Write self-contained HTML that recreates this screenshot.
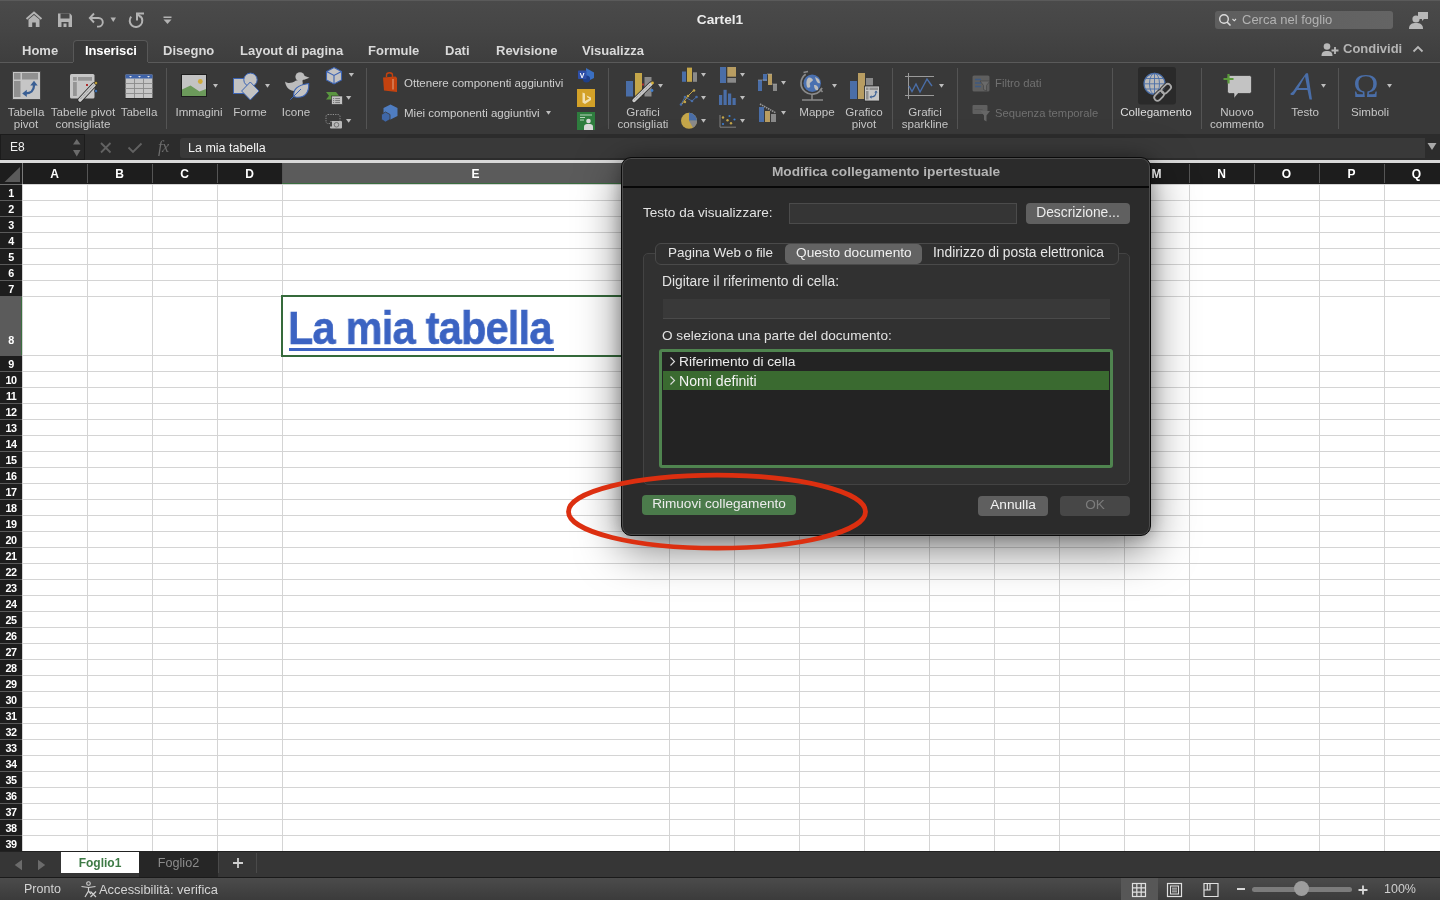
<!DOCTYPE html>
<html><head><meta charset="utf-8">
<style>
*{margin:0;padding:0;box-sizing:border-box}
html,body{width:1440px;height:900px;overflow:hidden;background:#fff;font-family:"Liberation Sans",sans-serif}
.t,.rl,.ch,.rh{will-change:transform}
.a{position:absolute}
.t{position:absolute;white-space:nowrap;color:#e6e6e6}
.ch{top:164px;height:21px;line-height:21px;text-align:center;color:#fff;font-weight:bold;font-size:12px}
.rh{left:0;width:22px;height:16px;line-height:16px;text-align:center;color:#fff;font-weight:bold;font-size:10.8px;letter-spacing:-0.6px}
.rl{position:absolute;white-space:nowrap;color:#c6c6c6;font-size:11.6px;text-align:center;line-height:12px}
.sep{position:absolute;top:68px;width:1px;height:61px;background:#545454}
</style></head><body>
<div class="a" style="left:0;top:163px;width:1440px;height:21px;background:#1d1d1d"></div>
<div class="a" style="left:0;top:160px;width:1440px;height:3px;background:#d9d9d9"></div>
<svg class="a" style="left:0;top:163px" width="22" height="21"><polygon points="4.5,19 20,4 20,19" fill="#5a5a5a"/></svg>
<div class="a" style="left:22px;top:163px;width:1px;height:21px;background:#7a7a7a"></div>
<div class="a ch" style="left:22px;width:65px">A</div>
<div class="a ch" style="left:87px;width:65px">B</div>
<div class="a ch" style="left:152px;width:65px">C</div>
<div class="a ch" style="left:217px;width:65px">D</div>
<div class="a" style="left:282px;top:163px;width:387px;height:21px;background:#5b5b5b"></div><div class="a" style="left:282px;top:183px;width:387px;height:1.6px;background:#3b6e40"></div>
<div class="a ch" style="left:282px;width:387px">E</div>
<div class="a ch" style="left:669px;width:65px">F</div>
<div class="a ch" style="left:734px;width:65px">G</div>
<div class="a ch" style="left:799px;width:65px">H</div>
<div class="a ch" style="left:864px;width:65px">I</div>
<div class="a ch" style="left:929px;width:65px">J</div>
<div class="a ch" style="left:994px;width:65px">K</div>
<div class="a ch" style="left:1059px;width:65px">L</div>
<div class="a ch" style="left:1124px;width:65px">M</div>
<div class="a ch" style="left:1189px;width:65px">N</div>
<div class="a ch" style="left:1254px;width:65px">O</div>
<div class="a ch" style="left:1319px;width:65px">P</div>
<div class="a ch" style="left:1384px;width:65px">Q</div>
<div class="a" style="left:87px;top:164px;width:1px;height:19px;background:#555"></div>
<div class="a" style="left:152px;top:164px;width:1px;height:19px;background:#555"></div>
<div class="a" style="left:217px;top:164px;width:1px;height:19px;background:#555"></div>
<div class="a" style="left:282px;top:164px;width:1px;height:19px;background:#555"></div>
<div class="a" style="left:669px;top:164px;width:1px;height:19px;background:#555"></div>
<div class="a" style="left:734px;top:164px;width:1px;height:19px;background:#555"></div>
<div class="a" style="left:799px;top:164px;width:1px;height:19px;background:#555"></div>
<div class="a" style="left:864px;top:164px;width:1px;height:19px;background:#555"></div>
<div class="a" style="left:929px;top:164px;width:1px;height:19px;background:#555"></div>
<div class="a" style="left:994px;top:164px;width:1px;height:19px;background:#555"></div>
<div class="a" style="left:1059px;top:164px;width:1px;height:19px;background:#555"></div>
<div class="a" style="left:1124px;top:164px;width:1px;height:19px;background:#555"></div>
<div class="a" style="left:1189px;top:164px;width:1px;height:19px;background:#555"></div>
<div class="a" style="left:1254px;top:164px;width:1px;height:19px;background:#555"></div>
<div class="a" style="left:1319px;top:164px;width:1px;height:19px;background:#555"></div>
<div class="a" style="left:1384px;top:164px;width:1px;height:19px;background:#555"></div>
<div class="a" style="left:1449px;top:164px;width:1px;height:19px;background:#555"></div>
<div class="a" style="left:23px;top:184px;width:1417px;height:667px;background:#fff"></div>
<div class="a" style="left:0;top:184px;width:1440px;height:1px;background:#d4d4d4"></div>
<div class="a" style="left:0;top:200px;width:1440px;height:1px;background:#d4d4d4"></div>
<div class="a" style="left:0;top:216px;width:1440px;height:1px;background:#d4d4d4"></div>
<div class="a" style="left:0;top:232px;width:1440px;height:1px;background:#d4d4d4"></div>
<div class="a" style="left:0;top:248px;width:1440px;height:1px;background:#d4d4d4"></div>
<div class="a" style="left:0;top:264px;width:1440px;height:1px;background:#d4d4d4"></div>
<div class="a" style="left:0;top:280px;width:1440px;height:1px;background:#d4d4d4"></div>
<div class="a" style="left:0;top:296px;width:1440px;height:1px;background:#d4d4d4"></div>
<div class="a" style="left:0;top:355px;width:1440px;height:1px;background:#d4d4d4"></div>
<div class="a" style="left:0;top:371px;width:1440px;height:1px;background:#d4d4d4"></div>
<div class="a" style="left:0;top:387px;width:1440px;height:1px;background:#d4d4d4"></div>
<div class="a" style="left:0;top:403px;width:1440px;height:1px;background:#d4d4d4"></div>
<div class="a" style="left:0;top:419px;width:1440px;height:1px;background:#d4d4d4"></div>
<div class="a" style="left:0;top:435px;width:1440px;height:1px;background:#d4d4d4"></div>
<div class="a" style="left:0;top:451px;width:1440px;height:1px;background:#d4d4d4"></div>
<div class="a" style="left:0;top:467px;width:1440px;height:1px;background:#d4d4d4"></div>
<div class="a" style="left:0;top:483px;width:1440px;height:1px;background:#d4d4d4"></div>
<div class="a" style="left:0;top:499px;width:1440px;height:1px;background:#d4d4d4"></div>
<div class="a" style="left:0;top:515px;width:1440px;height:1px;background:#d4d4d4"></div>
<div class="a" style="left:0;top:531px;width:1440px;height:1px;background:#d4d4d4"></div>
<div class="a" style="left:0;top:547px;width:1440px;height:1px;background:#d4d4d4"></div>
<div class="a" style="left:0;top:563px;width:1440px;height:1px;background:#d4d4d4"></div>
<div class="a" style="left:0;top:579px;width:1440px;height:1px;background:#d4d4d4"></div>
<div class="a" style="left:0;top:595px;width:1440px;height:1px;background:#d4d4d4"></div>
<div class="a" style="left:0;top:611px;width:1440px;height:1px;background:#d4d4d4"></div>
<div class="a" style="left:0;top:627px;width:1440px;height:1px;background:#d4d4d4"></div>
<div class="a" style="left:0;top:643px;width:1440px;height:1px;background:#d4d4d4"></div>
<div class="a" style="left:0;top:659px;width:1440px;height:1px;background:#d4d4d4"></div>
<div class="a" style="left:0;top:675px;width:1440px;height:1px;background:#d4d4d4"></div>
<div class="a" style="left:0;top:691px;width:1440px;height:1px;background:#d4d4d4"></div>
<div class="a" style="left:0;top:707px;width:1440px;height:1px;background:#d4d4d4"></div>
<div class="a" style="left:0;top:723px;width:1440px;height:1px;background:#d4d4d4"></div>
<div class="a" style="left:0;top:739px;width:1440px;height:1px;background:#d4d4d4"></div>
<div class="a" style="left:0;top:755px;width:1440px;height:1px;background:#d4d4d4"></div>
<div class="a" style="left:0;top:771px;width:1440px;height:1px;background:#d4d4d4"></div>
<div class="a" style="left:0;top:787px;width:1440px;height:1px;background:#d4d4d4"></div>
<div class="a" style="left:0;top:803px;width:1440px;height:1px;background:#d4d4d4"></div>
<div class="a" style="left:0;top:819px;width:1440px;height:1px;background:#d4d4d4"></div>
<div class="a" style="left:0;top:835px;width:1440px;height:1px;background:#d4d4d4"></div>
<div class="a" style="left:0;top:851px;width:1440px;height:1px;background:#d4d4d4"></div>
<div class="a" style="left:0;top:184px;width:22px;height:667px;background:#1d1d1d"></div>
<div class="a rh" style="top:185px">1</div>
<div class="a" style="left:0;top:200px;width:22px;height:1px;background:#5a5a5a"></div>
<div class="a rh" style="top:201px">2</div>
<div class="a" style="left:0;top:216px;width:22px;height:1px;background:#5a5a5a"></div>
<div class="a rh" style="top:217px">3</div>
<div class="a" style="left:0;top:232px;width:22px;height:1px;background:#5a5a5a"></div>
<div class="a rh" style="top:233px">4</div>
<div class="a" style="left:0;top:248px;width:22px;height:1px;background:#5a5a5a"></div>
<div class="a rh" style="top:249px">5</div>
<div class="a" style="left:0;top:264px;width:22px;height:1px;background:#5a5a5a"></div>
<div class="a rh" style="top:265px">6</div>
<div class="a" style="left:0;top:280px;width:22px;height:1px;background:#5a5a5a"></div>
<div class="a rh" style="top:281px">7</div>
<div class="a" style="left:0;top:296px;width:22px;height:1px;background:#5a5a5a"></div>
<div class="a" style="left:0;top:297px;width:22px;height:59px;background:#5b5b5b;border-right:1.6px solid #3b6e40"></div>
<div class="a rh" style="top:332px">8</div>
<div class="a" style="left:0;top:355px;width:22px;height:1px;background:#5a5a5a"></div>
<div class="a rh" style="top:356px">9</div>
<div class="a" style="left:0;top:371px;width:22px;height:1px;background:#5a5a5a"></div>
<div class="a rh" style="top:372px">10</div>
<div class="a" style="left:0;top:387px;width:22px;height:1px;background:#5a5a5a"></div>
<div class="a rh" style="top:388px">11</div>
<div class="a" style="left:0;top:403px;width:22px;height:1px;background:#5a5a5a"></div>
<div class="a rh" style="top:404px">12</div>
<div class="a" style="left:0;top:419px;width:22px;height:1px;background:#5a5a5a"></div>
<div class="a rh" style="top:420px">13</div>
<div class="a" style="left:0;top:435px;width:22px;height:1px;background:#5a5a5a"></div>
<div class="a rh" style="top:436px">14</div>
<div class="a" style="left:0;top:451px;width:22px;height:1px;background:#5a5a5a"></div>
<div class="a rh" style="top:452px">15</div>
<div class="a" style="left:0;top:467px;width:22px;height:1px;background:#5a5a5a"></div>
<div class="a rh" style="top:468px">16</div>
<div class="a" style="left:0;top:483px;width:22px;height:1px;background:#5a5a5a"></div>
<div class="a rh" style="top:484px">17</div>
<div class="a" style="left:0;top:499px;width:22px;height:1px;background:#5a5a5a"></div>
<div class="a rh" style="top:500px">18</div>
<div class="a" style="left:0;top:515px;width:22px;height:1px;background:#5a5a5a"></div>
<div class="a rh" style="top:516px">19</div>
<div class="a" style="left:0;top:531px;width:22px;height:1px;background:#5a5a5a"></div>
<div class="a rh" style="top:532px">20</div>
<div class="a" style="left:0;top:547px;width:22px;height:1px;background:#5a5a5a"></div>
<div class="a rh" style="top:548px">21</div>
<div class="a" style="left:0;top:563px;width:22px;height:1px;background:#5a5a5a"></div>
<div class="a rh" style="top:564px">22</div>
<div class="a" style="left:0;top:579px;width:22px;height:1px;background:#5a5a5a"></div>
<div class="a rh" style="top:580px">23</div>
<div class="a" style="left:0;top:595px;width:22px;height:1px;background:#5a5a5a"></div>
<div class="a rh" style="top:596px">24</div>
<div class="a" style="left:0;top:611px;width:22px;height:1px;background:#5a5a5a"></div>
<div class="a rh" style="top:612px">25</div>
<div class="a" style="left:0;top:627px;width:22px;height:1px;background:#5a5a5a"></div>
<div class="a rh" style="top:628px">26</div>
<div class="a" style="left:0;top:643px;width:22px;height:1px;background:#5a5a5a"></div>
<div class="a rh" style="top:644px">27</div>
<div class="a" style="left:0;top:659px;width:22px;height:1px;background:#5a5a5a"></div>
<div class="a rh" style="top:660px">28</div>
<div class="a" style="left:0;top:675px;width:22px;height:1px;background:#5a5a5a"></div>
<div class="a rh" style="top:676px">29</div>
<div class="a" style="left:0;top:691px;width:22px;height:1px;background:#5a5a5a"></div>
<div class="a rh" style="top:692px">30</div>
<div class="a" style="left:0;top:707px;width:22px;height:1px;background:#5a5a5a"></div>
<div class="a rh" style="top:708px">31</div>
<div class="a" style="left:0;top:723px;width:22px;height:1px;background:#5a5a5a"></div>
<div class="a rh" style="top:724px">32</div>
<div class="a" style="left:0;top:739px;width:22px;height:1px;background:#5a5a5a"></div>
<div class="a rh" style="top:740px">33</div>
<div class="a" style="left:0;top:755px;width:22px;height:1px;background:#5a5a5a"></div>
<div class="a rh" style="top:756px">34</div>
<div class="a" style="left:0;top:771px;width:22px;height:1px;background:#5a5a5a"></div>
<div class="a rh" style="top:772px">35</div>
<div class="a" style="left:0;top:787px;width:22px;height:1px;background:#5a5a5a"></div>
<div class="a rh" style="top:788px">36</div>
<div class="a" style="left:0;top:803px;width:22px;height:1px;background:#5a5a5a"></div>
<div class="a rh" style="top:804px">37</div>
<div class="a" style="left:0;top:819px;width:22px;height:1px;background:#5a5a5a"></div>
<div class="a rh" style="top:820px">38</div>
<div class="a" style="left:0;top:835px;width:22px;height:1px;background:#5a5a5a"></div>
<div class="a rh" style="top:836px">39</div>
<div class="a" style="left:0;top:851px;width:22px;height:1px;background:#5a5a5a"></div>
<div class="a" style="left:87px;top:184px;width:1px;height:667px;background:#d4d4d4"></div>
<div class="a" style="left:152px;top:184px;width:1px;height:667px;background:#d4d4d4"></div>
<div class="a" style="left:217px;top:184px;width:1px;height:667px;background:#d4d4d4"></div>
<div class="a" style="left:282px;top:184px;width:1px;height:667px;background:#d4d4d4"></div>
<div class="a" style="left:669px;top:184px;width:1px;height:667px;background:#d4d4d4"></div>
<div class="a" style="left:734px;top:184px;width:1px;height:667px;background:#d4d4d4"></div>
<div class="a" style="left:799px;top:184px;width:1px;height:667px;background:#d4d4d4"></div>
<div class="a" style="left:864px;top:184px;width:1px;height:667px;background:#d4d4d4"></div>
<div class="a" style="left:929px;top:184px;width:1px;height:667px;background:#d4d4d4"></div>
<div class="a" style="left:994px;top:184px;width:1px;height:667px;background:#d4d4d4"></div>
<div class="a" style="left:1059px;top:184px;width:1px;height:667px;background:#d4d4d4"></div>
<div class="a" style="left:1124px;top:184px;width:1px;height:667px;background:#d4d4d4"></div>
<div class="a" style="left:1189px;top:184px;width:1px;height:667px;background:#d4d4d4"></div>
<div class="a" style="left:1254px;top:184px;width:1px;height:667px;background:#d4d4d4"></div>
<div class="a" style="left:1319px;top:184px;width:1px;height:667px;background:#d4d4d4"></div>
<div class="a" style="left:1384px;top:184px;width:1px;height:667px;background:#d4d4d4"></div>
<div class="a" style="left:1449px;top:184px;width:1px;height:667px;background:#d4d4d4"></div>
<div class="a" style="left:22px;top:184px;width:1px;height:667px;background:#d4d4d4"></div>
<div class="a" style="left:0;top:184px;width:22px;height:1px;background:#6e6e6e"></div>
<div class="a" style="left:0;top:0;width:1440px;height:62px;background:linear-gradient(#4a4a4a,#454545 30px,#3e3e3e)"></div>
<div class="a" style="left:0;top:0;width:1440px;height:1px;background:#5a5a5a"></div>
<!-- title icons -->
<svg class="a" style="left:25px;top:11px" width="18" height="17" viewBox="0 0 18 17">
 <path d="M1.5 8 L9 1.5 L16.5 8" fill="none" stroke="#b3b3b3" stroke-width="2" stroke-linejoin="miter"/>
 <path d="M3.5 8.5 L9 4 L14.5 8.5 V16 H10.8 V11.5 H7.2 V16 H3.5 Z" fill="#b3b3b3"/>
</svg>
<svg class="a" style="left:57px;top:12px" width="16" height="16" viewBox="0 0 16 16">
 <path d="M1 1.5 H13 L15 3.5 V15 H1 Z" fill="#b3b3b3"/>
 <rect x="3.5" y="1.5" width="9" height="5" fill="#474747"/>
 <rect x="4.5" y="10" width="7" height="5" fill="#474747"/>
 <rect x="6.5" y="11.5" width="3" height="3.5" fill="#b3b3b3"/>
</svg>
<svg class="a" style="left:88px;top:12px" width="18" height="17" viewBox="0 0 18 17">
 <path d="M6 1.5 L1.8 6 L6 10.5" fill="none" stroke="#b3b3b3" stroke-width="1.9"/>
 <path d="M2 6 H10.5 A4.3 4.3 0 0 1 10.5 14.6 H9" fill="none" stroke="#b3b3b3" stroke-width="1.9"/>
</svg>
<svg class="a" style="left:110px;top:17px" width="7" height="6"><path d="M0.5 0.5 H6 L3.25 5 Z" fill="#b3b3b3"/></svg>
<svg class="a" style="left:128px;top:12px" width="17" height="17" viewBox="0 0 17 17">
 <path d="M3.2 4.6 A6.3 6.3 0 1 0 12.2 4" fill="none" stroke="#b3b3b3" stroke-width="2"/>
 <path d="M9 8.5 V1.6 H16" fill="none" stroke="#b3b3b3" stroke-width="2"/>
 <path d="M9.5 2 L12.5 5" stroke="#b3b3b3" stroke-width="2"/>
</svg>
<svg class="a" style="left:163px;top:16px" width="9" height="9" viewBox="0 0 9 9">
 <rect x="0.5" y="0.5" width="8" height="1.5" fill="#b3b3b3"/>
 <path d="M0.5 3.5 H8.5 L4.5 8 Z" fill="#b3b3b3"/>
</svg>
<div class="t" style="left:0;width:1440px;text-align:center;top:12px;font-size:13.7px;font-weight:bold;color:#ececec;line-height:16px">Cartel1</div>
<!-- search -->
<div class="a" style="left:1215px;top:11px;width:178px;height:18px;background:linear-gradient(90deg,#5e5e5e,#646464);border-radius:3px"></div>
<svg class="a" style="left:1218px;top:13px" width="22" height="14" viewBox="0 0 22 14">
 <circle cx="6" cy="6" r="4.3" fill="none" stroke="#dcdcdc" stroke-width="1.4"/>
 <path d="M9 9 L12.5 12.5" stroke="#dcdcdc" stroke-width="1.6"/>
 <path d="M14.5 6 L16.3 7.8 L18 6" fill="none" stroke="#dcdcdc" stroke-width="1.1"/>
</svg>
<div class="t" style="left:1242px;top:12px;font-size:13px;color:#b2b2b2;line-height:16px">Cerca nel foglio</div>
<svg class="a" style="left:1408px;top:10px" width="21" height="20" viewBox="0 0 21 20">
 <path d="M10 2 H20 V9 H16 L14 11 V9 H10 Z" fill="#b8b8b8"/>
 <circle cx="8" cy="9" r="3.6" fill="#b8b8b8"/>
 <path d="M1 19 C1 14 4 13 8 13 C12 13 15 14 15 19 Z" fill="#b8b8b8"/>
</svg>
<!-- tabs -->

<div class="a" style="left:73px;top:40px;width:75px;height:24px;background:#393939;border:1px solid #585858;border-bottom:none;border-radius:4px 4px 0 0"></div>
<div class="t" style="left:22px;top:43px;font-size:13px;font-weight:bold;color:#d9d9d9;line-height:16px">Home</div>
<div class="t" style="left:85px;top:43px;font-size:13px;font-weight:bold;color:#ffffff;line-height:16px;letter-spacing:-0.1px">Inserisci</div>
<div class="t" style="left:163px;top:43px;font-size:13px;font-weight:bold;color:#d9d9d9;line-height:16px">Disegno</div>
<div class="t" style="left:240px;top:43px;font-size:13px;font-weight:bold;color:#d9d9d9;line-height:16px">Layout di pagina</div>
<div class="t" style="left:368px;top:43px;font-size:13px;font-weight:bold;color:#d9d9d9;line-height:16px">Formule</div>
<div class="t" style="left:445px;top:43px;font-size:13px;font-weight:bold;color:#d9d9d9;line-height:16px">Dati</div>
<div class="t" style="left:496px;top:43px;font-size:13px;font-weight:bold;color:#d9d9d9;line-height:16px">Revisione</div>
<div class="t" style="left:582px;top:43px;font-size:13px;font-weight:bold;color:#d9d9d9;line-height:16px">Visualizza</div>
<svg class="a" style="left:1321px;top:42px" width="18" height="15" viewBox="0 0 18 15">
 <circle cx="6" cy="4.5" r="3.3" fill="#b8b8b8"/>
 <path d="M0.5 14 C0.5 10 2.5 9 6 9 C9.5 9 11.5 10 11.5 14 Z" fill="#b8b8b8"/>
 <path d="M14 5 V12 M10.5 8.5 H17.5" stroke="#b8b8b8" stroke-width="1.8"/>
</svg>
<div class="t" style="left:1343px;top:41px;font-size:13px;font-weight:bold;color:#b4b4b4;line-height:16px">Condividi</div>
<svg class="a" style="left:1412px;top:45px" width="12" height="8" viewBox="0 0 12 8"><path d="M1.5 6.5 L6 2 L10.5 6.5" fill="none" stroke="#b8b8b8" stroke-width="1.8"/></svg>

<div class="a" style="left:0;top:62px;width:1440px;height:72px;background:#393939"></div>
<div class="a" style="left:0;top:62px;width:73px;height:1px;background:#5a5a5a"></div>
<div class="a" style="left:148px;top:62px;width:1292px;height:1px;background:#5a5a5a"></div>
<div class="sep" style="left:166px"></div>
<div class="sep" style="left:366px"></div>
<div class="sep" style="left:608px"></div>
<div class="sep" style="left:892px"></div>
<div class="sep" style="left:957px"></div>
<div class="sep" style="left:1112px"></div>
<div class="sep" style="left:1201px"></div>
<div class="sep" style="left:1274px"></div>
<div class="sep" style="left:1338px"></div>
<!-- labels -->
<div class="rl" style="left:-24px;width:100px;top:105.5px">Tabella<br>pivot</div>
<div class="rl" style="left:33px;width:100px;top:105.5px">Tabelle pivot<br>consigliate</div>
<div class="rl" style="left:89px;width:100px;top:105.5px">Tabella</div>
<div class="rl" style="left:149px;width:100px;top:105.5px">Immagini</div>
<div class="rl" style="left:200px;width:100px;top:105.5px">Forme</div>
<div class="rl" style="left:246px;width:100px;top:105.5px">Icone</div>
<div class="rl" style="left:593px;width:100px;top:105.5px">Grafici<br>consigliati</div>
<div class="rl" style="left:767px;width:100px;top:105.5px">Mappe</div>
<div class="rl" style="left:814px;width:100px;top:105.5px">Grafico<br>pivot</div>
<div class="rl" style="left:875px;width:100px;top:105.5px">Grafici<br>sparkline</div>
<div class="rl" style="left:1106px;width:100px;top:105.5px;color:#dedede;font-size:11.6px">Collegamento</div>
<div class="rl" style="left:1187px;width:100px;top:105.5px">Nuovo<br>commento</div>
<div class="rl" style="left:1255px;width:100px;top:105.5px">Testo</div>
<div class="rl" style="left:1320px;width:100px;top:105.5px">Simboli</div>
<div class="t" style="left:404px;top:76px;font-size:11.5px;color:#cfcfcf;line-height:14px">Ottenere componenti aggiuntivi</div>
<div class="t" style="left:404px;top:106px;font-size:11.5px;color:#cfcfcf;line-height:14px">Miei componenti aggiuntivi</div>
<div class="t" style="left:995px;top:76px;font-size:11.3px;color:#707070;line-height:14px">Filtro dati</div>
<div class="t" style="left:995px;top:106px;font-size:11.2px;color:#707070;line-height:14px">Sequenza temporale</div>
<!-- carets -->
<svg class="a" style="left:0;top:62px" width="1440" height="72">
 <g fill="#bdbdbd">
 <path d="M213 22h5l-2.5 3.7z"/>
 <path d="M265 22h5l-2.5 3.7z"/>
 <path d="M348.7 11h5.3l-2.65 3.8z"/>
 <path d="M346 34h5.3l-2.65 3.8z"/>
 <path d="M346 57h5.3l-2.65 3.8z"/>
 <path d="M546 49h5l-2.5 3.7z"/>
 <path d="M658 22h5l-2.5 3.7z"/>
 <path d="M701 11h5l-2.5 3.7z"/>
 <path d="M701 34h5l-2.5 3.7z"/>
 <path d="M701 57h5l-2.5 3.7z"/>
 <path d="M740 11h5l-2.5 3.7z"/>
 <path d="M740 34h5l-2.5 3.7z"/>
 <path d="M740 57h5l-2.5 3.7z"/>
 <path d="M781 19h5l-2.5 3.7z"/>
 <path d="M781 49h5l-2.5 3.7z"/>
 <path d="M832 22h5l-2.5 3.7z"/>
 <path d="M939 22h5l-2.5 3.7z"/>
 <path d="M1321 22h5l-2.5 3.7z"/>
 <path d="M1387 22h5l-2.5 3.7z"/>
 </g>
</svg>

<svg class="a" style="left:0;top:0" width="620" height="134">
 <!-- Tabella pivot -->
 <rect x="12" y="71" width="29" height="29" fill="#555" opacity="0.6"/>
 <rect x="13" y="72" width="27" height="27" fill="#c6c6c6"/>
 <rect x="14" y="73" width="6.5" height="6.5" fill="#909090"/>
 <rect x="22" y="73" width="16" height="6.5" fill="#909090"/>
 <rect x="14" y="81" width="6.5" height="16" fill="#909090"/>
 <path d="M25.5 93.4 C30.5 93.4 34 90.5 34 85.5 V84" fill="none" stroke="#3a5f94" stroke-width="2.3"/>
 <path d="M30.3 85.5 L34 80.8 L37.7 85.5 Z M26.8 89.7 L22.2 93.4 L26.8 97.1 Z" fill="#3a5f94"/>
 <!-- Tabelle pivot consigliate -->
 <rect x="70" y="74" width="24.5" height="24.5" rx="1.5" fill="#c6c6c6"/>
 <rect x="73" y="77" width="3.8" height="3.7" fill="#959595"/>
 <rect x="78" y="77" width="14" height="3.7" fill="#959595"/>
 <rect x="73" y="82" width="3.8" height="14" fill="#959595"/>
 <rect x="86" y="84" width="2" height="2" fill="#b03030"/>
 <path d="M80 100 L94 85" stroke="#2a2a2a" stroke-width="5.2" stroke-linecap="round"/>
 <path d="M80 100 L94 85" stroke="#c9c9c9" stroke-width="3.6" stroke-linecap="round"/>
 <path d="M80.5 99 L93.5 85.5" stroke="#777" stroke-width="0.8" stroke-dasharray="1 1"/>
 <circle cx="96" cy="83" r="1.5" fill="#d8b23a" stroke="#2a2a2a" stroke-width="0.6"/>
 <circle cx="96" cy="91" r="1.5" fill="#3f7fd0" stroke="#2a2a2a" stroke-width="0.6"/>
 <!-- Tabella -->
 <rect x="125" y="74" width="28" height="24.5" fill="#1e1e1e"/>
 <rect x="125.5" y="74.5" width="27" height="23.5" fill="#c6c6c6"/>
 <rect x="125.5" y="74.5" width="27" height="4" fill="#3f63a8"/>
 <path d="M129 76h3l-1.5 1.6zM138 76h3l-1.5 1.6zM147 76h3l-1.5 1.6z" fill="#e8e8e8"/>
 <path d="M134.5 78.5V98M143.5 78.5V98M125.5 83.5H152.5M125.5 88.5H152.5M125.5 93.5H152.5" stroke="#8a8a8a" stroke-width="0.9"/>
 <!-- Immagini -->
 <rect x="181" y="74" width="26" height="23" fill="#1e1e1e"/>
 <rect x="182" y="75" width="24" height="21" fill="#c3c3c3"/>
 <path d="M182 96 V89.5 L190.5 85.5 L199.5 91.5 L206 89 V96 Z" fill="#6c9a5b"/>
 <circle cx="200.3" cy="81.5" r="2.4" fill="#cfa93a"/>
 <!-- Forme -->
 <rect x="233.5" y="78.5" width="15" height="15" fill="#c3c3c3" stroke="#3c64b4" stroke-width="1"/>
 <circle cx="250.5" cy="79.8" r="6.7" fill="#c3c3c3" stroke="#3c64b4" stroke-width="1"/>
 <path d="M250.3 82 L259 91 L250.3 100 L241.6 91 Z" fill="#c3c3c3" stroke="#3c64b4" stroke-width="1"/>
 <!-- Icone -->
 <circle cx="300" cy="76.8" r="4.6" fill="#bcbcbc"/>
 <path d="M303.5 75.5 L309.5 77.8 L303.5 80 Z" fill="#bcbcbc"/>
 <path d="M285 81.5 C287.5 83.5 291 83.8 296 80.5 L302 80 C304 84 302 88.5 297 90.5 C291.5 92 286 89 285 81.5 Z" fill="#bcbcbc"/>
 <path d="M293.8 96.5 C292.8 89.5 297.5 85 308.7 83.5 C309.3 93 304.5 98 296.5 97.2 Z" fill="#c3c3c3" stroke="#3c64b4" stroke-width="1.1"/>
 <path d="M290.3 99.7 L301 89" stroke="#3c64b4" stroke-width="1"/>
<!-- cube -->
 <path d="M334 67.5 L341.5 71.5 V80 L334 84 L326.5 80 V71.5 Z" fill="#c3c3c3" stroke="#3c64b4" stroke-width="1.1"/>
 <path d="M326.5 71.5 L334 75.5 L341.5 71.5 M334 75.5 V84" fill="none" stroke="#3c64b4" stroke-width="1.1"/>
 <!-- smartart -->
 <path d="M326 92 H336 L340 97 L331.5 99.5 H326 L329 95.8 Z" fill="#5a9640"/>
 <rect x="331.5" y="96" width="11" height="8.5" fill="#c3c3c3" stroke="#2a2a2a" stroke-width="0.6"/>
 <path d="M333 98.6h1.2M335.2 98.6h4.8M333 100.6h1.2M335.2 100.6h4.8M333 102.6h1.2M335.2 102.6h4.8" stroke="#6a6a6a" stroke-width="0.9"/>
 <!-- screenshot -->
 <rect x="326" y="114.5" width="14" height="9" rx="2" fill="none" stroke="#aaa" stroke-width="0.8" stroke-dasharray="1.2 1.2"/>
 <rect x="330" y="121" width="12" height="7.5" rx="1" fill="#b8b8b8"/>
 <rect x="330" y="121.5" width="2" height="5" fill="#444"/>
 <circle cx="336.5" cy="124.8" r="2.3" fill="none" stroke="#666" stroke-width="0.9"/>
 <!-- office bag -->
 <path d="M386.5 77 V75 C386.5 73 387.5 72.8 389.5 72.8 C391.5 72.8 392.5 73 392.5 75 V77" fill="none" stroke="#c4420f" stroke-width="1.4"/>
 <path d="M383 77.5 L395.5 76.5 L397 78 V92 L384 90.5 Z" fill="#c4420f"/>
 <path d="M393 79 V89.5" stroke="#f0c0a0" stroke-width="0.8"/>
 <!-- miei componenti -->
 <path d="M390.5 104.5 L397.5 108 V116 L390.5 119.5 L383.5 116 V108 Z" fill="#4f7dc1"/>
 <path d="M385.5 112 L390 114.5 V119.5 L385.5 122 L381.5 119.5 V114.5 Z" fill="#3f67a8" stroke="#393939" stroke-width="0.8"/>
 <!-- visio -->
 <path d="M586 68 L594 72.5 V78 L586 82 Z" fill="#3a6fc2"/>
 <circle cx="586.5" cy="79" r="3.6" fill="#1e3f8a"/>
 <rect x="578" y="70.5" width="8.5" height="8.5" rx="0.8" fill="#2e4fa8"/>
 <text x="582.2" y="77.5" font-size="7" font-weight="bold" fill="#fff" text-anchor="middle" font-family="Liberation Sans">V</text>
 <!-- bing -->
 <rect x="577" y="89" width="18" height="18" fill="#d3a128"/>
 <path d="M582.5 92.5 L585 93.5 V101 L589.5 98.5 L587.5 97.5 L586.5 95.5 L591 97.5 V100 L585 104 L582.5 102.5 Z" fill="#f2e0b0"/>
 <!-- people -->
 <rect x="577" y="112" width="18" height="18" fill="#2e7d3e"/>
 <path d="M580 115h12M580 117.5h5M580 120h4" stroke="#d8eadb" stroke-width="0.8"/>
 <circle cx="588.5" cy="121" r="2.3" fill="#d8d8d8"/>
 <path d="M584 130 V126.5 C584 124.5 586 124 588.5 124 C591 124 593 124.5 593 126.5 V130 Z" fill="#d8d8d8"/>
</svg>

<svg class="a" style="left:0;top:0" width="1440" height="134">
 <!-- grafici consigliati -->
 <rect x="626" y="81" width="7" height="15.5" fill="#4a6ea8"/>
 <rect x="635" y="73" width="7" height="23.5" fill="#c4a64a"/>
 <rect x="644.5" y="77" width="7" height="19.5" fill="#8a8a8a"/>
 <path d="M634 100.5 L651 84" stroke="#2a2a2a" stroke-width="5" stroke-linecap="round"/>
 <path d="M634 100.5 L651 84" stroke="#c9c9c9" stroke-width="3.4" stroke-linecap="round"/>
 <path d="M634.5 99.5 L650.5 84.5" stroke="#777" stroke-width="0.8" stroke-dasharray="1 1"/>
 <rect x="642" y="83.5" width="2" height="2" fill="#b03030"/>
 <circle cx="652.5" cy="83" r="1.4" fill="#d8b23a"/>
 <circle cx="652" cy="90.5" r="1.4" fill="#3f7fd0"/>
 <!-- small bar chart -->
 <rect x="682" y="71.5" width="4" height="10.3" fill="#4a6ea8"/>
 <rect x="687" y="67.6" width="5" height="14.2" fill="#c4a64a"/>
 <rect x="693" y="72.3" width="4" height="9.5" fill="#8a8a8a"/>
 <!-- line chart -->
 <path d="M681 104.5 L685 97 L692 101 L696.5 97" fill="none" stroke="#4a6ea8" stroke-width="1"/>
 <path d="M682 104 L688 96 L694 90" fill="none" stroke="#c4a64a" stroke-width="1"/>
 <g fill="#4a6ea8"><circle cx="681" cy="104.5" r="1.3"/><circle cx="685" cy="97" r="1.3"/><circle cx="692" cy="101" r="1.3"/><circle cx="696.5" cy="97" r="1.3"/></g>
 <g fill="#c4a64a"><circle cx="688" cy="96" r="1.3"/><circle cx="694" cy="90.5" r="1.3"/><circle cx="685" cy="102" r="1.2"/></g>
 <!-- pie -->
 <circle cx="689" cy="120.8" r="8" fill="#c4a64a"/>
 <path d="M689 120.8 V112.8 A8 8 0 0 1 697 120.8 Z" fill="#4a6ea8"/>
 <path d="M689 120.8 H697 A8 8 0 0 1 693 127.7 Z" fill="#8a8a8a"/>
 <!-- treemap -->
 <rect x="720" y="67" width="6" height="16" fill="#4a6ea8"/>
 <rect x="727.3" y="67" width="8.7" height="9.7" fill="#b89d62"/>
 <rect x="727.3" y="78" width="8.7" height="4.7" fill="#8a8a8a"/>
 <!-- histogram -->
 <g fill="#4a6ea8"><rect x="719" y="95" width="3.2" height="10"/><rect x="723.5" y="89.8" width="3.2" height="15.2"/><rect x="728" y="93.5" width="3.2" height="11.5"/><rect x="732.5" y="98" width="3.2" height="7"/></g>
 <!-- scatter -->
 <path d="M720 115 V127.2 H736" fill="none" stroke="#8a8a8a" stroke-width="0.9"/>
 <g fill="#c4a64a"><circle cx="723" cy="117.5" r="1.2"/><circle cx="727.5" cy="120.3" r="1.2"/><circle cx="731" cy="123.3" r="1.2"/></g>
 <g fill="#3f7fd0"><circle cx="729.5" cy="116" r="1.1"/><circle cx="734.5" cy="119.5" r="1.1"/><circle cx="723" cy="124" r="1.1"/></g>
 <!-- waterfall -->
 <rect x="758" y="80" width="4" height="11" fill="#4a6ea8"/>
 <rect x="763" y="74" width="4" height="7" fill="#4a6ea8"/>
 <rect x="768" y="74" width="4" height="11" fill="#b89d62"/>
 <rect x="773" y="84" width="4" height="7" fill="#8a8a8a"/>
 <path d="M758 80h9M767 74h5M772 84h5" stroke="#bbb" stroke-width="0.5"/>
 <!-- funnel bars -->
 <rect x="759" y="107" width="5" height="15" fill="#4a6ea8"/>
 <rect x="765" y="111" width="5" height="11" fill="#b89d62"/>
 <rect x="771" y="114" width="5" height="8" fill="#8a8a8a"/>
 <path d="M760 104 L776 113" stroke="#9a9a9a" stroke-width="1.6" stroke-dasharray="1.5 0.8"/>
 <!-- mappe globe -->
 <path d="M805.7 74.2 A11 11 0 1 0 822 87.8" fill="none" stroke="#8a8a8a" stroke-width="1.7"/><path d="M803.5 72.5 L808 71.5 M820 89 L822.5 92" stroke="#8a8a8a" stroke-width="1.5"/>
 <circle cx="812.2" cy="83.2" r="8.7" fill="#4a70b0"/>
 <path d="M808 78 C810 77 812 78 813 80 C812 82 809 82 810 85 C811 87 809 89 807 87 C806 84 806 80 808 78 Z M815 77 C818 78 820 80 820 83 C818 84 817 82 816 80 Z M814 85 C817 85 819 87 818 90 C816 91 814 89 814 85 Z" fill="#bcbcbc"/>
 <path d="M812 94 V99.5 M802 100 H823" stroke="#8a8a8a" stroke-width="1.5"/>
 <!-- grafico pivot -->
 <rect x="850" y="81" width="7" height="18" fill="#4a6ea8"/>
 <rect x="858" y="73" width="7" height="26" fill="#b89d62"/>
 <rect x="866" y="78" width="7" height="7.5" fill="#8a8a8a"/>
 <rect x="864.5" y="86" width="15" height="15" fill="#c6c6c6" stroke="#2a2a2a" stroke-width="0.8"/>
 <rect x="866" y="87.5" width="2.5" height="2.5" fill="#909090"/><rect x="869.5" y="87.5" width="8.5" height="2.5" fill="#909090"/><rect x="866" y="91" width="2.5" height="8.5" fill="#909090"/>
 <path d="M871 97 C874 97 876 96 876 92" fill="none" stroke="#3a5f94" stroke-width="1.2"/>
 <path d="M874.3 92.5 L876 90.5 L877.7 92.5Z M871.5 95.3 L869.5 97 L871.5 98.7Z" fill="#3a5f94"/>
 <!-- sparkline -->
 <path d="M905 76.5 H934 M905 95.5 H934 M908.5 73 V99" stroke="#9a9a9a" stroke-width="1"/>
 <path d="M909 86 L912 91.5 L916 84 L920 92 L927 79 L932 86" fill="none" stroke="#4a6ea8" stroke-width="1.4"/>
 <!-- filtro dati (disabled) -->
 <rect x="972.5" y="75.5" width="17" height="16" rx="1.5" fill="#5f5f5f"/>
 <path d="M975 79.5h6M975 83h6M975 86.5h6" stroke="#3f5a80" stroke-width="1.3"/>
 <path d="M980 81 H990 L986.5 85.5 V91 L983.5 89.5 V85.5 Z" fill="#6a6a6a" stroke="#3f3f3f" stroke-width="0.6"/>
 <!-- sequenza (disabled) -->
 <rect x="972.5" y="105" width="15" height="9" rx="1" fill="#5f5f5f"/>
 <path d="M974.5 109.5h8" stroke="#555" stroke-width="1"/>
 <path d="M980.5 111 H990 L986.5 115.5 V121.5 L984 120 V115.5 Z" fill="#666"/>
 <!-- collegamento -->
 <rect x="1138" y="67" width="38" height="37.5" rx="3" fill="#2a2a2a"/>
 <circle cx="1154.5" cy="83.8" r="10.5" fill="#b9b9b9" stroke="#4a6ea8" stroke-width="1.2"/>
 <path d="M1144 83.8 H1165 M1145.5 78.5 H1163.5 M1145.5 89 H1163.5 M1154.5 73.3 V94.3" stroke="#4a6ea8" stroke-width="0.9"/>
 <ellipse cx="1154.5" cy="83.8" rx="5" ry="10.5" fill="none" stroke="#4a6ea8" stroke-width="0.9"/>
 <g transform="rotate(-45 1163 92)">
  <rect x="1152" y="88.8" width="11" height="6.4" rx="3.2" fill="none" stroke="#2a2a2a" stroke-width="3.6"/>
  <rect x="1162" y="88.8" width="11" height="6.4" rx="3.2" fill="none" stroke="#2a2a2a" stroke-width="3.6"/>
  <rect x="1152" y="88.8" width="11" height="6.4" rx="3.2" fill="none" stroke="#a8a8a8" stroke-width="1.8"/>
  <rect x="1162" y="88.8" width="11" height="6.4" rx="3.2" fill="none" stroke="#a8a8a8" stroke-width="1.8"/>
 </g>
 <!-- nuovo commento -->
 <path d="M1229.5 75.5 H1249.5 Q1251.5 75.5 1251.5 77.5 V91.5 Q1251.5 93.5 1249.5 93.5 H1238 L1234 98.5 V93.5 H1229.5 Q1227.5 93.5 1227.5 91.5 V77.5 Q1227.5 75.5 1229.5 75.5 Z" fill="#c3c3c3" stroke="#2a2a2a" stroke-width="0.6"/>
 <path d="M1228.5 74 V83.5 M1223.5 79 H1233.5" stroke="#5a9a3a" stroke-width="2.2"/>
 <!-- testo A -->
 <path d="M1290.5 93.5 Q1293 92 1296 87 L1306 73.3 H1308 L1312 99.5 H1309.5 L1307.5 90 H1297 L1294 94.5 Q1292.5 95.5 1290.5 94.5 Z M1298.5 88 H1307.2 L1305 76.5 Z" fill="#4a6ea8"/>
 <!-- simboli omega -->
 <text x="1366" y="97" font-size="34" fill="#4a6ea8" text-anchor="middle" font-family="Liberation Serif">Ω</text>
</svg>

<div class="a" style="left:0;top:134px;width:1440px;height:26px;background:#2c2c2c"></div>
<div class="a" style="left:0;top:134px;width:85px;height:25.5px;background:#282828;border:1px solid #1c1c1c"></div>
<div class="t" style="left:10px;top:140px;font-size:12px;color:#f0f0f0;line-height:14px">E8</div>
<svg class="a" style="left:72px;top:138px" width="10" height="20"><path d="M1 6.5 H8.5 L4.75 1 Z M1 12 H8.5 L4.75 18.5 Z" fill="#6b6b6b"/></svg>
<svg class="a" style="left:99px;top:141px" width="14" height="13"><path d="M2 2 L11.5 11.5 M11.5 2 L2 11.5" stroke="#626262" stroke-width="1.8"/></svg>
<svg class="a" style="left:127px;top:141px" width="16" height="13"><path d="M1.5 6.5 L6 11 L14.5 2.5" fill="none" stroke="#626262" stroke-width="1.8"/></svg>
<div class="t" style="left:158px;top:138px;font-size:16px;font-style:italic;font-family:'Liberation Serif',serif;color:#6d6d6d;line-height:18px;letter-spacing:-0.5px">fx</div>
<div class="a" style="left:180px;top:138px;width:1245px;height:20px;background:#393939;border-radius:3px 0 0 3px"></div>
<div class="t" style="left:188px;top:141px;font-size:12.5px;color:#f4f4f4;line-height:15px">La mia tabella</div>
<svg class="a" style="left:1426px;top:141px" width="12" height="10"><path d="M1.5 2 H10.5 L6 9 Z" fill="#a8a8a8"/></svg>

<div class="a" style="left:281px;top:295px;width:389px;height:62px;border:2px solid #356a3b"></div>
<div class="t" style="left:288px;top:303px;font-size:46px;font-weight:bold;color:#3b63c2;line-height:50px;transform-origin:0 0;transform:scaleX(0.9);letter-spacing:-0.8px;-webkit-text-stroke:0.6px #3b63c2">La mia tabella</div>
<div class="a" style="left:289px;top:348px;width:265px;height:2.5px;background:#3b63c2"></div>

<div class="a" style="left:0;top:851px;width:1440px;height:27px;background:#363636"></div>
<div class="a" style="left:0;top:851px;width:1440px;height:1px;background:#222"></div>
<svg class="a" style="left:10px;top:857px" width="40" height="16"><path d="M12 2.7 V13.2 L4.7 7.95 Z M28 2.7 V13.2 L35.2 7.95 Z" fill="#6b6b6b"/></svg>
<div class="a" style="left:139px;top:852px;width:79px;height:25px;background:#262626"></div>
<div class="a" style="left:61px;top:852px;width:78px;height:21px;background:#ffffff"></div>
<div class="t" style="left:61px;width:78px;text-align:center;top:856px;font-size:12px;font-weight:bold;color:#3d7a45;line-height:15px">Foglio1</div>
<div class="t" style="left:139px;width:79px;text-align:center;top:856px;font-size:12.6px;color:#8c8c8c;line-height:15px">Foglio2</div>
<div class="a" style="left:218px;top:853px;width:1px;height:20px;background:#4a4a4a"></div>
<div class="a" style="left:256px;top:853px;width:1px;height:20px;background:#4a4a4a"></div>
<svg class="a" style="left:232px;top:857px" width="12" height="12"><path d="M6 1 V11 M1 6 H11" stroke="#cfcfcf" stroke-width="1.8"/></svg>
<div class="a" style="left:0;top:877px;width:1440px;height:1px;background:#1a1a1a"></div>
<div class="a" style="left:0;top:878px;width:1440px;height:22px;background:linear-gradient(#4b4b4b,#3b3b3b)"></div>
<div class="t" style="left:24px;top:882px;font-size:12.5px;color:#d4d4d4;line-height:15px">Pronto</div>
<svg class="a" style="left:80px;top:881px" width="18" height="17" viewBox="0 0 18 17">
 <circle cx="8.5" cy="2.5" r="1.8" fill="none" stroke="#cfcfcf" stroke-width="1.1"/>
 <path d="M1.5 5.5 L8.5 6.5 L15.5 5.5 M8.5 6.5 V10 L5 16 M8.5 10 L11 13" fill="none" stroke="#cfcfcf" stroke-width="1.2"/>
 <path d="M10.5 10.5 L16 16 M16 10.5 L10.5 16" stroke="#cfcfcf" stroke-width="1.2"/>
</svg>
<div class="t" style="left:99px;top:882px;font-size:12.9px;color:#d4d4d4;line-height:15px">Accessibilità: verifica</div>
<div class="a" style="left:1121px;top:878px;width:37px;height:22px;background:#575757"></div>
<svg class="a" style="left:1130px;top:881px" width="100" height="18" viewBox="0 0 100 18">
 <rect x="2.5" y="2.5" width="13" height="13" fill="none" stroke="#e0e0e0" stroke-width="1.2"/>
 <path d="M2.5 6.8H15.5M2.5 11.2H15.5M6.8 2.5V15.5M11.2 2.5V15.5" stroke="#e0e0e0" stroke-width="1.2"/>
 <rect x="37.5" y="2.5" width="14" height="13" fill="none" stroke="#e0e0e0" stroke-width="1.2"/>
 <rect x="40.5" y="5" width="8" height="8" fill="none" stroke="#e0e0e0" stroke-width="1"/>
 <path d="M42 7.2H47M42 9H47M42 10.8H47" stroke="#e0e0e0" stroke-width="0.8"/>
 <path d="M74 2.5 H88 V15.5 H74 Z M74 9 H80 V2.5 M80 5 V2.5" fill="none" stroke="#e0e0e0" stroke-width="1.2"/>
 <path d="M77.3 2.5 V9" stroke="#e0e0e0" stroke-width="1.2"/>
</svg>
<div class="a" style="left:1237px;top:888px;width:8px;height:2px;background:#d8d8d8"></div>
<div class="a" style="left:1252px;top:887px;width:100px;height:5px;background:#7c7c7c;border-radius:3px"></div>
<div class="a" style="left:1294px;top:881px;width:15px;height:15px;background:#9d9d9d;border-radius:50%"></div>
<svg class="a" style="left:1358px;top:885px" width="10" height="10"><path d="M5 .5V9.5M.5 5H9.5" stroke="#d8d8d8" stroke-width="1.8"/></svg>
<div class="t" style="left:1384px;top:882px;font-size:12.5px;color:#cfcfcf;line-height:15px">100%</div>

<div class="a" style="left:621px;top:157px;width:530px;height:379px;border-radius:10px;box-shadow:0 14px 44px rgba(0,0,0,0.5),0 0 16px rgba(0,0,0,0.25)"></div>
<div class="a" style="left:621px;top:157px;width:530px;height:379px;border-radius:10px;background:#2b2b2b;border:1px solid #0a0a0a;overflow:hidden">
 <div class="a" style="left:0;top:0;width:528px;height:377px;border-radius:9px;border:1px solid #4c4c4c;border-bottom-color:#454545"></div>
 <div class="a" style="left:1px;top:28px;width:526px;height:1.5px;background:#080808"></div>
 <div class="t" style="left:0;width:528px;text-align:center;top:5px;font-size:13.7px;font-weight:bold;color:#b4b4b4;line-height:18px">Modifica collegamento ipertestuale</div>
 <div class="t" style="left:20.5px;top:46px;font-size:13.55px;color:#e2e2e2;line-height:18px">Testo da visualizzare:</div>
 <div class="a" style="left:167px;top:45px;width:228px;height:21px;background:#353535;border:1px solid #4b4b4b"></div>
 <div class="a" style="left:404px;top:45px;width:104px;height:20.5px;background:#606060;border-radius:4px"></div>
 <div class="t" style="left:404px;width:104px;text-align:center;top:46px;font-size:13.8px;color:#ececec;line-height:18px">Descrizione...</div>
 <!-- group box -->
 <div class="a" style="left:20.5px;top:95px;width:487.5px;height:232px;background:#313131;border:1px solid #434343;border-radius:5px"></div>
 <!-- segmented tabs -->
 <div class="a" style="left:33px;top:84.5px;width:463.5px;height:22px;background:#303030;border:1px solid #4a4a4a;border-radius:6px"></div>
 <div class="a" style="left:162.5px;top:85.5px;width:137px;height:20px;background:#636363;border-radius:5px"></div>
 <div class="t" style="left:46px;top:86px;font-size:13.45px;color:#e6e6e6;line-height:18px">Pagina Web o file</div>
 <div class="t" style="left:173.5px;top:86px;font-size:13.7px;color:#f0f0f0;line-height:18px">Questo documento</div>
 <div class="t" style="left:311px;top:86px;font-size:13.8px;color:#e6e6e6;line-height:18px">Indirizzo di posta elettronica</div>
 <div class="t" style="left:39.5px;top:115px;font-size:13.8px;color:#e2e2e2;line-height:18px">Digitare il riferimento di cella:</div>
 <div class="a" style="left:41px;top:140.5px;width:447px;height:20px;background:#393939;border-bottom:1px solid #4a4a4a"></div>
 <div class="t" style="left:39.5px;top:169px;font-size:13.6px;color:#e2e2e2;line-height:18px">O seleziona una parte del documento:</div>
 <!-- tree -->
 <div class="a" style="left:37px;top:191px;width:454px;height:119px;background:#232323;border:3px solid #4f844f;border-radius:3px"></div>
 <div class="a" style="left:41px;top:213px;width:446px;height:19px;background:#3a6a30"></div>
 <svg class="a" style="left:47px;top:198px" width="8" height="30"><path d="M1.5 1.5 L5.5 5.5 L1.5 9.5 M1.5 20.5 L5.5 24.5 L1.5 28.5" fill="none" stroke="#dcdcdc" stroke-width="1.1"/></svg>
 <div class="t" style="left:57.3px;top:195px;font-size:13.7px;color:#ececec;line-height:18px">Riferimento di cella</div>
 <div class="t" style="left:57.3px;top:214px;font-size:14.1px;color:#f4f4f4;line-height:18px">Nomi definiti</div>
 <!-- buttons -->
 <div class="a" style="left:19.5px;top:337px;width:154px;height:19.5px;background:#4b7b4b;border-radius:4px"></div>
 <div class="t" style="left:19.5px;width:154px;text-align:center;top:337.3px;font-size:13.6px;color:#ececec;line-height:18px">Rimuovi collegamento</div>
 <div class="a" style="left:356px;top:337.5px;width:70px;height:20px;background:#5f5f5f;border-radius:4px"></div>
 <div class="t" style="left:356px;width:70px;text-align:center;top:338px;font-size:13.7px;color:#f2f2f2;line-height:18px">Annulla</div>
 <div class="a" style="left:438px;top:337.5px;width:70px;height:20px;background:#474747;border-radius:4px"></div>
 <div class="t" style="left:438px;width:70px;text-align:center;top:338px;font-size:13.6px;color:#7c7c7c;line-height:18px">OK</div>
</div>
<svg class="a" style="left:560px;top:466px" width="320" height="92">
 <ellipse cx="157" cy="45.7" rx="148.5" ry="36.5" fill="none" stroke="#dc2f10" stroke-width="4.8"/>
</svg>

</body></html>
